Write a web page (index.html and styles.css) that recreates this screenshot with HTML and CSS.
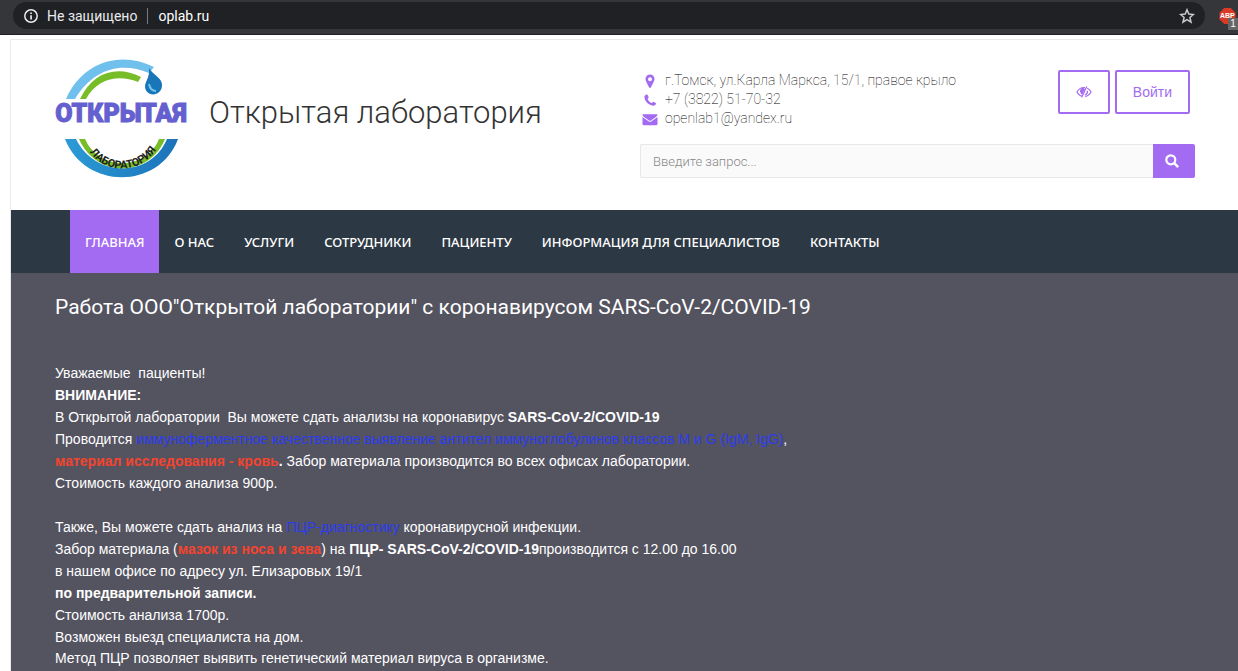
FILE: index.html
```html
<!DOCTYPE html>
<html lang="ru">
<head>
<meta charset="utf-8">
<meta name="viewport" content="width=device-width, initial-scale=1">
<title>Открытая лаборатория</title>
<link rel="stylesheet" href="styles.css">
</head>
<body>
<div class="browser-bar">
  <div class="omnibox">
    <svg class="info-icon" viewBox="0 0 16 16" aria-hidden="true"><circle cx="8" cy="8" r="6.2" fill="none" stroke="currentColor" stroke-width="1.5"/><path d="M7.2 7.2h1.7v4.2H7.2zM7.2 4.4h1.7V6H7.2z" fill="currentColor"/></svg>
    <span class="security">Не защищено</span>
    <span class="url">oplab.ru</span>
    <button class="star" aria-label="Добавить в закладки"><svg viewBox="0 0 16 16"><path d="M8 1.800l1.800 4.300 4.600.4-3.500 3 1.100 4.600L8 11.600l-4 2.500 1.100-4.600-3.500-3 4.600-.4z" fill="none" stroke="currentColor" stroke-width="1.500"/></svg></button>
  </div>
  <button class="extension" aria-label="Adblock Plus">
    <svg viewBox="0 0 20 24"><path d="M5.200 2h6.600l4.700 4.700v6.600L11.800 18H5.200L.5 13.300V6.700z" fill="#d93a26"/><text class="abp" x="1" y="12">ABP</text></svg>
    <span class="count">1</span>
  </button>
</div>
<div class="site">
  <header class="header">
    <a class="brand" href="#">
      <svg class="logo" viewBox="0 0 134 120" role="img" aria-label="Открытая лаборатория">
        <defs><path id="arc" d="M29 81C42 118 92 118 107 79"/>
        <linearGradient id="blue"><stop offset="0" stop-color="#2b9bd6"/><stop offset="1" stop-color="#1c72b9"/></linearGradient></defs>
        <path d="M11 39C27 3 64-10 99 7L94 13C66 1 38 9 20 39z" fill="#6fc0ec"/>
        <path d="M25 39C38 12 62 5 86 17L83 22C63 14 42 19 31 39z" fill="#76bd27"/>
        <path d="M94 8c4 7 14 10 13 18-1 11-16 11-17 1 0-6 5-9 4-19z" fill="#1976b8"/>
        <path d="M94 24c1 5 4 7 7 7" fill="none" stroke="#70c6ee" stroke-width="2"/>
        <path d="M10 79h11c19 39 75 39 91 0h11C104 130 30 130 10 79z" fill="url(#blue)"/>
        <path d="M24 79h6c14 32 61 32 74 0h6C94 118 41 118 24 79z" fill="#76bd27"/>
        <path d="M34 79c12 28 54 28 66 0z" fill="#fff"/>
        <text class="logo-name" x="66" y="62">ОТКРЫТАЯ</text>
        <text class="logo-lab"><textPath href="#arc" startOffset="50%">ЛАБОРАТОРИЯ</textPath></text>
      </svg>
      <span class="brand-name">Открытая лаборатория</span>
    </a>
    <div class="header-side">
      <div class="header-top">
        <address class="contacts">
          <span class="contact"><svg viewBox="0 0 16 16"><path d="M8 1.500a4.500 4.500 0 0 0-4.500 4.500c0 2 1.500 3.800 3.500 8.300.4.900 1.600.9 2 0 2-4.500 3.500-6.300 3.500-8.300A4.500 4.500 0 0 0 8 1.500zm0 2.700a2 2 0 1 1 0 4 2 2 0 0 1 0-4z" fill="currentColor"/></svg>г.Томск, ул.Карла Маркса, 15/1, правое крыло</span>
          <span class="contact"><svg viewBox="0 0 16 16"><path d="M4.600 2.500c.4-.2.7 0 .9.300l1.200 2.500c.2.500-1.200 1.500-1 2 .8 1.600 2.100 2.900 3.700 3.700.6.200 1.600-1.500 2.100-1.200l2.200 1.200c.4.300.4.600.2 1-.5 1.300-1.700 1.900-3 1.700-4.500-.7-8-4.300-8.500-8.400-.1-1.400.9-2.400 2.200-2.800z" fill="currentColor"/></svg>+7 (3822) 51-70-32</span>
          <span class="contact"><svg viewBox="0 0 16 16"><path d="M1 3.200h14c.3 0 .5.300.5.600-.2.800-.7 1.400-1.300 1.900L9 9.400c-.7.500-1.300.5-2 0L1.800 5.700C1 5.200.5 4.500.5 3.700c0-.3.200-.5.500-.5zM.5 6l6 4.300c1 .7 2 .7 3 0l6-4.300v7c0 .7-.5 1.200-1.200 1.200H1.700C1 14.200.5 13.700.5 13z" fill="currentColor"/></svg>openlab1@yandex.ru</span>
        </address>
        <div class="actions">
          <button class="outline-btn" aria-label="Версия для слабовидящих"><svg class="eye" viewBox="0 0 16 16"><path d="M6.800 12.500C4.200 12 2.200 10.300 1 8c1.500-2.800 4-4.500 7-4.500l1 .1M11.200 4.300C13 5.100 14.200 6.400 15 8c-1.200 2.300-3.300 4-6 4.500M10.800 2.500L5.600 13.500M4.600 8c0-2 1.500-3.400 3.400-3.400M11.400 6.800c.3 2.100-.6 3.500-2.500 4.200" fill="none" stroke="currentColor" stroke-width="1.200"/><path d="M4.500 5.500L8 4.500l1 .5-3 6-1.500-2z" fill="currentColor"/></svg></button>
          <button class="outline-btn">Войти</button>
        </div>
      </div>
      <form class="search">
        <input class="search-input" type="text" aria-label="Поиск" placeholder="Введите запрос...">
        <button class="search-btn" type="button" aria-label="Найти"><svg viewBox="0 0 16 16"><circle cx="6.800" cy="6.800" r="4.500" fill="none" stroke="currentColor" stroke-width="2.200"/><path d="M10.200 10.200l4 4" stroke="currentColor" stroke-width="2.500"/></svg></button>
      </form>
    </div>
  </header>
  <nav class="nav">
    <a class="nav-link active" href="#">ГЛАВНАЯ</a>
    <a class="nav-link" href="#">О НАС</a>
    <a class="nav-link" href="#">УСЛУГИ</a>
    <a class="nav-link" href="#">СОТРУДНИКИ</a>
    <a class="nav-link" href="#">ПАЦИЕНТУ</a>
    <a class="nav-link" href="#">ИНФОРМАЦИЯ ДЛЯ СПЕЦИАЛИСТОВ</a>
    <a class="nav-link" href="#">КОНТАКТЫ</a>
  </nav>
  <main class="content">
    <h1 class="title">Работа ООО"Открытой лаборатории" с коронавирусом SARS-CoV-2/COVID-19</h1>
    <p class="text">Уважаемые&nbsp; пациенты!<br>
      <b>ВНИМАНИЕ:</b><br>
      В Открытой лаборатории&nbsp; Вы можете сдать анализы на коронавирус <b>SARS-CoV-2/COVID-19</b><br>
      Проводится <span class="blue">иммуноферментное качественное выявление антител иммуноглобулинов классов М и G (IgM, IgG)</span>,<br>
      <b class="red">материал исследования - кровь</b><b>.</b> Забор материала производится во всех офисах лаборатории.<br>
      Стоимость каждого анализа 900р.</p>
    <p class="text">Также, Вы можете сдать анализ на <span class="blue">ПЦР-диагностику</span> коронавирусной инфекции.<br>
      Забор материала (<b class="red">мазок из носа и зева</b>) на <b>ПЦР- SARS-CoV-2/COVID-19</b>производится с 12.00 до 16.00<br>
      в нашем офисе по адресу ул. Елизаровых 19/1<br>
      <b>по предварительной записи.</b><br>
      Стоимость анализа 1700р.<br>
      Возможен выезд специалиста на дом.</p>
    <p class="text note">Метод ПЦР позволяет выявить генетический материал вируса в организме.</p>
  </main>
</div>
</body>
</html>
```
FILE: styles.css
```css
* { box-sizing: border-box; }
html, body { margin: 0; }
body {
  min-height: 100vh;
  display: flex;
  flex-direction: column;
  background: #fff;
  color: #333;
  font-family: "Liberation Sans", Arial, sans-serif;
  font-size: 14px;
}
button { padding: 0; border: 0; background: none; font: inherit; cursor: pointer; }
a { color: inherit; text-decoration: none; }
svg { display: block; }

.browser-bar {
  display: flex;
  gap: 14px;
  height: 35px;
  padding: 2px 0 5px 13px;
  background: #35363a;
  border-bottom: 1px solid #1f2023;
  overflow: hidden;
}
.omnibox {
  flex: 1;
  display: flex;
  align-items: center;
  padding: 0 10px;
  border-radius: 14px;
  background: #202124;
  color: #e8eaed;
  font-family: Roboto, sans-serif;
}
.info-icon { width: 16px; height: 16px; margin-right: 8px; }
.security { padding-right: 10px; border-right: 1px solid #77797d; }
.url { padding-left: 10px; color: #fff; }
.star { margin-left: auto; color: #c8cacd; }
.star svg { width: 16px; height: 16px; }
.extension { position: relative; width: 19px; height: 28px; }
.extension svg { width: 20px; height: 24px; margin-top: 4px; }
.abp { font: 700 7px "Liberation Sans", sans-serif; fill: #fff; }
.count {
  position: absolute;
  right: 0;
  bottom: 0;
  width: 10px;
  height: 12px;
  background: #666;
  color: #fff;
  font-size: 10px;
  line-height: 12px;
}

.site {
  flex: 1;
  display: flex;
  flex-direction: column;
  margin: 4px 0 0 10px;
  border: solid #eaeaea;
  border-width: 1px 0 0 1px;
}
.header {
  display: grid;
  grid-template-columns: 585fr 555fr;
  padding: 20px 43px 30px 44px;
}
.brand { display: flex; align-items: center; gap: 20px; align-self: start; }
.logo { width: 134px; height: 120px; overflow: visible; }
.logo-name {
  font: 900 25px Roboto, sans-serif;
  fill: #6560cf;
  stroke: #6560cf;
  stroke-width: 1px;
  text-anchor: middle;
}
.logo-lab { font: 700 11px Roboto, sans-serif; fill: #222; text-anchor: middle; }
.brand-name { padding-bottom: 14px; font: 300 31px/40px Roboto, sans-serif; }
.header-side { padding-top: 10px; }
.header-top { display: flex; justify-content: space-between; padding-right: 5px; }
.contacts {
  display: flex;
  flex-direction: column;
  padding-top: 1px;
  color: #000;
  font: 100 14px/19px Roboto, sans-serif;
}
.contact { display: flex; align-items: center; gap: 7px; padding-left: 2px; }
.contact svg { width: 16px; height: 16px; color: #a36bf2; }
.actions { display: flex; align-items: flex-start; gap: 5px; }
.outline-btn {
  height: 44px;
  padding: 0 16px;
  border: 2px solid #a36bf2;
  border-radius: 2px;
  color: #a36bf2;
}
.eye { width: 16px; height: 16px; }
.search { display: flex; margin-top: 16px; }
.search-input {
  flex: 1;
  min-width: 0;
  height: 34px;
  padding: 0 12px;
  border: 1px solid #e8e8e8;
  border-right: 0;
  border-radius: 2px 0 0 2px;
  background: #fafafa;
  font: 300 13px Roboto, sans-serif;
}
.search-input::placeholder { color: #888; }
.search-btn { width: 42px; height: 34px; padding: 0 11px; border-radius: 0 2px 2px 0; background: #a36bf2; color: #fff; }
.search-btn svg { width: 16px; height: 16px; }

.nav { display: flex; padding-left: 59px; background: #2c3843; }
.nav-link {
  padding: 2px 15px 0;
  color: #fff;
  font: 500 13px/61px "Noto Sans", sans-serif;
  white-space: nowrap;
}
.nav-link.active { background: #a36bf2; }

.content { flex: 1; padding: 20px 44px 0; background: #545360; color: #fff; }
.title { margin: 0 0 41px; font: 400 21px/28px Roboto, sans-serif; }
.text { margin: 0 0 22px; line-height: 22px; }
.text:nth-of-type(2) { margin: 0; }
.text.note { margin: 0; line-height: 20px; }
.blue { color: #2b3cf0; }
.red { color: #f4442e; }
```
